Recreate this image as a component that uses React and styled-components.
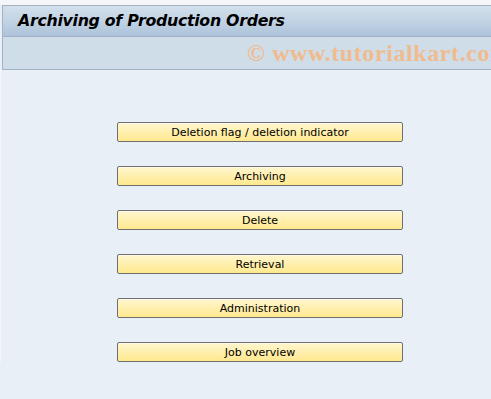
import React from "react";
import styled, { createGlobalStyle } from "styled-components";

const GlobalStyle = createGlobalStyle`
  html, body {
    margin: 0;
    padding: 0;
    background: #e8eff7;
  }
  body {
    font-family: "DejaVu Sans", "Liberation Sans", sans-serif;
  }
`;

const Screen = styled.div`
  width: 491px;
  height: 399px;
  overflow: hidden;
  background: #e8eff7;
  box-sizing: border-box;
  border-top: 5px solid #f4f6f9;
`;

const Header = styled.div`
  margin-left: 2px;
  border: 1px solid #a4b3c4;
  border-right: none;
`;

const TitleBar = styled.div`
  height: 30px;
  display: flex;
  align-items: center;
  padding-left: 15px;
  background: linear-gradient(to bottom, #d3e0ec 0%, #c2d3e4 50%, #adc3da 100%);
  border-bottom: 1px solid #9fb2c7;
`;

const Title = styled.h1`
  margin: 0 0 1px;
  font-family: "DejaVu Sans", "Liberation Sans", sans-serif;
  font-size: 15.8px;
  font-style: italic;
  font-weight: bold;
  color: #000;
  letter-spacing: -0.3px;
`;

const Toolbar = styled.div`
  height: 32px;
  display: flex;
  align-items: center;
  background: #cfdde9;
  padding-left: 244px;
  white-space: nowrap;
  overflow: hidden;
`;

const Watermark = styled.span`
  font-family: "Liberation Serif", "DejaVu Serif", serif;
  font-weight: bold;
  font-size: 24px;
  color: #f0bb8e;
  letter-spacing: 0.6px;
`;

const Body = styled.div`
  display: flex;
  flex-direction: column;
  gap: 24px;
  padding: 52px 0 0 116px;
  border-left: 1px solid #f4f6f9;
`;

const ActionButton = styled.button`
  width: 286px;
  height: 20px;
  padding: 0;
  border: 1px solid #6f6f6f;
  border-radius: 2px;
  background: linear-gradient(to bottom, #fff6cf 0%, #ffeea8 60%, #ffe98f 100%);
  box-shadow: inset 0 1px 0 #fffbe8;
  font-family: "DejaVu Sans", "Liberation Sans", sans-serif;
  font-size: 11px;
  color: #000;
  cursor: pointer;
  text-align: center;
`;

const actions = [
  "Deletion flag / deletion indicator",
  "Archiving",
  "Delete",
  "Retrieval",
  "Administration",
  "Job overview",
];

export default function App() {
  return (
    <Screen>
      <GlobalStyle />
      <Header>
        <TitleBar>
          <Title>Archiving of Production Orders</Title>
        </TitleBar>
        <Toolbar>
          <Watermark>© www.tutorialkart.com</Watermark>
        </Toolbar>
      </Header>
      <Body>
        {actions.map((label) => (
          <ActionButton key={label}>{label}</ActionButton>
        ))}
      </Body>
    </Screen>
  );
}
